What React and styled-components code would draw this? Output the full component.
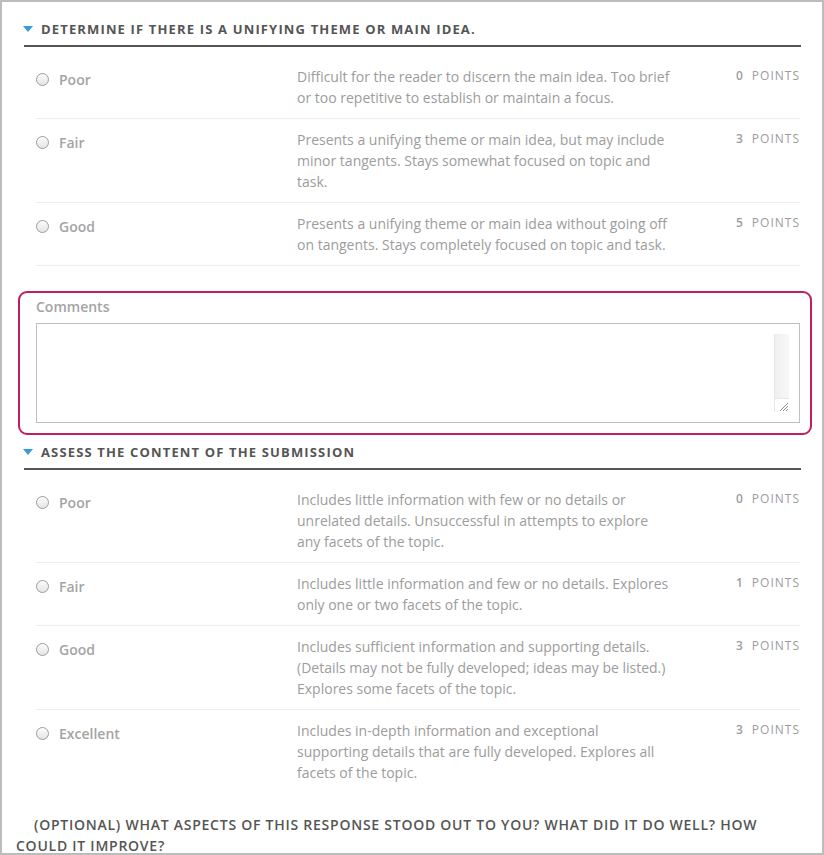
import React from "react";
import styled, { createGlobalStyle } from "styled-components";

const Global = createGlobalStyle`
  html, body { margin: 0; padding: 0; background: #fff; }
  body { font-family: "Open Sans", "Noto Sans", sans-serif; }
  * { box-sizing: border-box; }
`;

const Frame = styled.div`
  width: 824px;
  height: 855px;
  border: 2px solid #bcbcbc;
  overflow: hidden;
  padding: 18px 10px 0 14px;
  background: #fff;
`;

const Section = styled.section`
  margin: 0 11px 0 8px;
`;

const Heading = styled.h2`
  display: flex;
  align-items: center;
  gap: 8px;
  margin: 0;
  padding-bottom: 7px;
  border-bottom: 2px solid #555;
  font-size: 13px;
  line-height: 18px;
  font-weight: 700;
  letter-spacing: 1.15px;
  color: #555;
  text-transform: uppercase;
`;

const Caret = styled.span`
  width: 0;
  height: 0;
  margin-left: -1px;
  border-left: 5px solid transparent;
  border-right: 5px solid transparent;
  border-top: 6px solid #3a9bdc;
`;

const Rows = styled.div`
  margin: 9px 1px 0 12px;
`;

const Row = styled.div`
  display: grid;
  grid-template-columns: 261px 375px 1fr;
  padding: 10px 0;
  border-bottom: ${(p) => (p.$last ? "none" : "1px solid #ececec")};
`;

const Choice = styled.label`
  display: flex;
  align-items: center;
  gap: 10px;
  height: 21px;
  margin-top: 3px;
  font-size: 14px;
  font-weight: 600;
  color: #a4a4a4;
`;

const Radio = styled.input.attrs({ type: "radio" })`
  appearance: none;
  margin: 0;
  width: 13px;
  height: 13px;
  border-radius: 50%;
  border: 1px solid #9c9c9c;
  background: linear-gradient(#fdfdfd, #e4e4e4);
`;

const Desc = styled.div`
  font-size: 14px;
  line-height: 21px;
  color: #9c9c9c;
`;

const Points = styled.div`
  text-align: right;
  font-size: 12px;
  line-height: 19px;
  color: #9c9c9c;
  letter-spacing: 1px;
  b { font-weight: 600; margin-right: 8px; }
`;

const CommentBox = styled.div`
  margin: 25px 0 0 2px;
  padding: 5px 10px 10px 16px;
  border: 2px solid #c21d5e;
  border-radius: 9px;
`;

const CommentLabel = styled.label`
  display: block;
  margin-bottom: 7px;
  font-size: 14px;
  line-height: 18px;
  font-weight: 600;
  color: #a4a4a4;
`;

const Field = styled.div`
  display: flex;
  height: 100px;
  border: 1px solid #bcc0c4;
  padding: 10px;
`;

const TextArea = styled.textarea`
  flex: 1;
  border: none;
  outline: none;
  resize: none;
  font-family: inherit;
  font-size: 14px;
  padding: 0;
  background: #fff;
`;

const Track = styled.div`
  display: flex;
  flex-direction: column;
  width: 15px;
`;

const TrackBar = styled.div`
  flex: 1;
  border-left: 1px solid #e6e6e6;
  background: linear-gradient(to right, #efefef, #f8f8f8);
`;

const Grip = styled.div`
  height: 14px;
  border-top: 1px solid #e6e6e6;
  border-left: 1px solid #e6e6e6;
  display: flex;
  align-items: flex-end;
  justify-content: flex-end;
`;

const Spaced = styled.div`
  margin-top: 8px;
`;

const Question = styled.h3`
  margin: 21px 12px 0 0;
  text-indent: 18px;
  font-size: 14px;
  line-height: 21px;
  font-weight: 600;
  letter-spacing: 0.75px;
  color: #555;
`;

const first = [
  { label: "Poor", pts: 0, text: "Difficult for the reader to discern the main idea. Too brief or too repetitive to establish or maintain a focus." },
  { label: "Fair", pts: 3, text: "Presents a unifying theme or main idea, but may include minor tangents. Stays somewhat focused on topic and task." },
  { label: "Good", pts: 5, text: "Presents a unifying theme or main idea without going off on tangents. Stays completely focused on topic and task." },
];

const second = [
  { label: "Poor", pts: 0, text: "Includes little information with few or no details or unrelated details. Unsuccessful in attempts to explore any facets of the topic." },
  { label: "Fair", pts: 1, text: "Includes little information and few or no details. Explores only one or two facets of the topic." },
  { label: "Good", pts: 3, text: "Includes sufficient information and supporting details. (Details may not be fully developed; ideas may be listed.) Explores some facets of the topic." },
  { label: "Excellent", pts: 3, text: "Includes in-depth information and exceptional supporting details that are fully developed. Explores all facets of the topic." },
];

function Criterion({ name, items, lastBorder }) {
  return (
    <Section>
      <Heading>
        <Caret />
        {name}
      </Heading>
      <Rows>
        {items.map((it, i) => (
          <Row key={it.label} $last={!lastBorder && i === items.length - 1}>
            <Choice>
              <Radio name={name} />
              {it.label}
            </Choice>
            <Desc>{it.text}</Desc>
            <Points>
              <b>{it.pts}</b>POINTS
            </Points>
          </Row>
        ))}
      </Rows>
    </Section>
  );
}

export default function App() {
  return (
    <>
      <Global />
      <Frame>
        <Criterion name="Determine if there is a unifying theme or main idea." items={first} lastBorder />
        <CommentBox>
          <CommentLabel>Comments</CommentLabel>
          <Field>
            <TextArea />
            <Track>
              <TrackBar />
              <Grip>
                <svg width="11" height="11" viewBox="0 0 11 11">
                  <path d="M10 2 L2 10 M10 5 L5 10 M10 8 L8 10" stroke="#8a8a8a" strokeWidth="1" />
                </svg>
              </Grip>
            </Track>
          </Field>
        </CommentBox>
        <Spaced>
          <Criterion name="Assess the content of the submission" items={second} />
        </Spaced>
        <Question>
          (OPTIONAL) WHAT ASPECTS OF THIS RESPONSE STOOD OUT TO YOU? WHAT DID IT DO WELL? HOW COULD IT IMPROVE?
        </Question>
      </Frame>
    </>
  );
}
